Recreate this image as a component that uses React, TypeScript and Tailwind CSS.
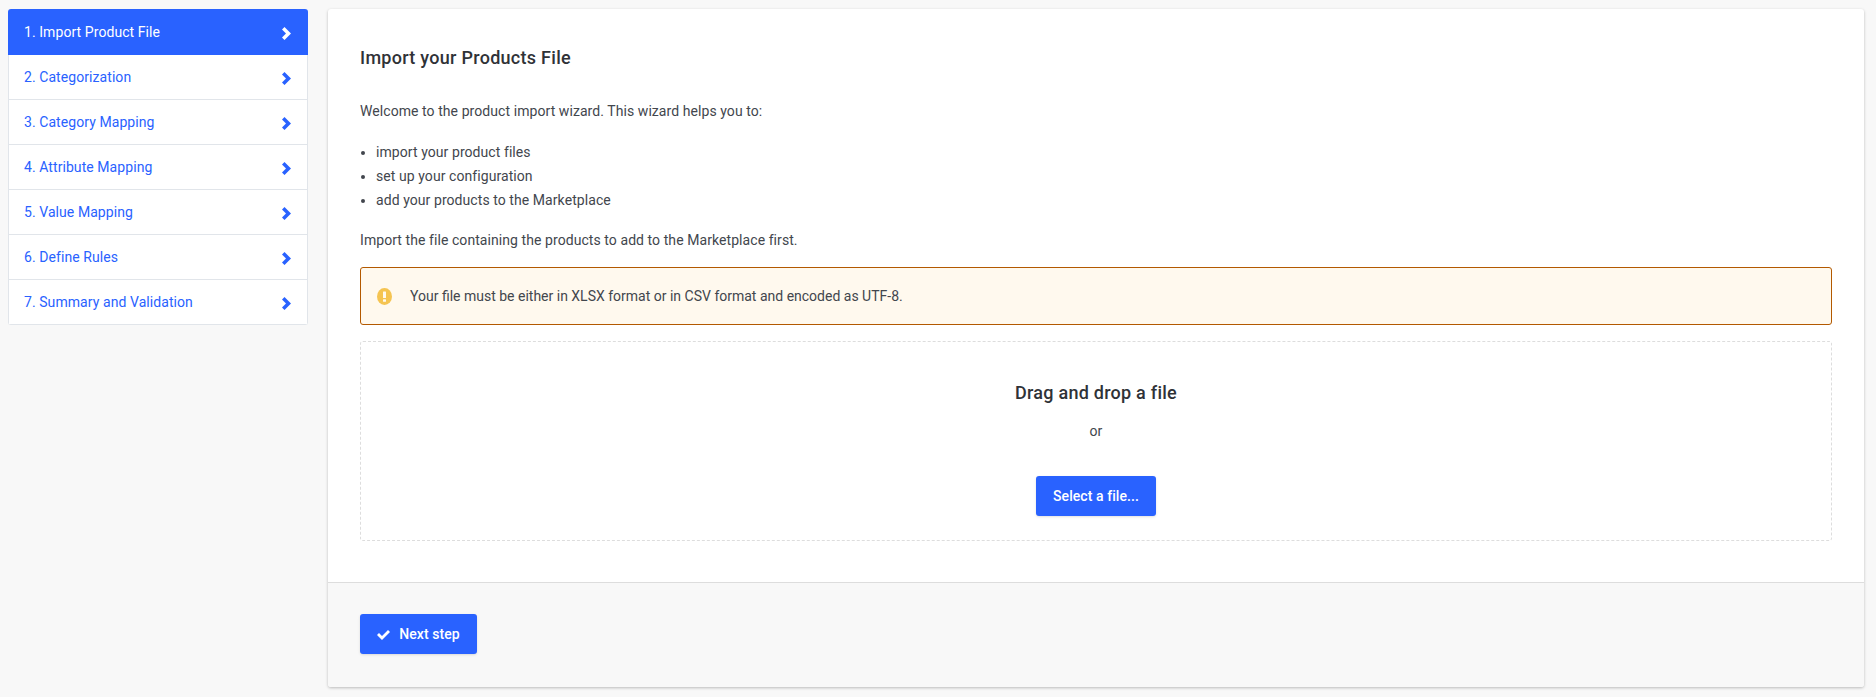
const steps = [
  "1. Import Product File",
  "2. Categorization",
  "3. Category Mapping",
  "4. Attribute Mapping",
  "5. Value Mapping",
  "6. Define Rules",
  "7. Summary and Validation",
];

const Chevron = () => (
  <svg viewBox="0 0 9 13" className="w-[9px] h-[13px] mt-[2px] fill-current">
    <path d="M0 2.5 L2.5 0 L9 6.5 L2.5 13 L0 10.5 L4 6.5 Z" />
  </svg>
);

const App = () => {
  return (
    <div className="min-h-[697px] bg-[#f8f8f8] pt-[9px] px-2 flex items-start gap-5 font-['Roboto',sans-serif] text-[14px] tracking-[0.005em] text-[#42464d]">
      <ul className="w-[300px] shrink-0 rounded-[3px] overflow-hidden">
        {steps.map((step, index) => (
          <li
            key={step}
            className={
              index === 0
                ? "h-[46px] pl-4 pr-[17px] flex items-center justify-between bg-[#2962ff] text-white"
                : "h-[45px] pl-[15px] pr-4 flex items-center justify-between bg-white text-[#2962ff] border-x border-b border-[#e1e5ea]"
            }
          >
            <span>{step}</span>
            <Chevron />
          </li>
        ))}
      </ul>

      <main className="w-[1536px] h-[678px] flex flex-col bg-white rounded-[3px] shadow-[0_1px_3px_rgba(0,0,0,0.25)]">
        <section className="h-[573px] px-8 pt-[37px]">
          <h2 className="text-[18px] leading-6 font-medium tracking-[0.28px] text-[#2f3237]">Import your Products File</h2>
          <p className="mt-[29px] leading-6">Welcome to the product import wizard. This wizard helps you to:</p>
          <ul className="mt-[17px] ml-4 list-disc leading-6">
            <li>import your product files</li>
            <li>set up your configuration</li>
            <li>add your products to the Marketplace</li>
          </ul>
          <p className="mt-4 leading-6">Import the file containing the products to add to the Marketplace first.</p>

          <div className="mt-[15px] h-[58px] px-4 flex items-center gap-[18px] bg-[#fff9ee] border border-[#b35900] rounded-[3px]">
            <svg viewBox="0 0 15 17" className="w-[15px] h-[17px]">
              <ellipse cx="7.5" cy="8.5" rx="7.5" ry="8.5" fill="#f5c451" />
              <rect x="6" y="3.5" width="3" height="6.5" rx="0.5" fill="#fff9ee" />
              <rect x="6" y="11.2" width="3" height="2.6" rx="0.5" fill="#fff9ee" />
            </svg>
            <span className="tracking-normal">Your file must be either in XLSX format or in CSV format and encoded as UTF-8.</span>
          </div>

          <div className="mt-[16px] h-[200px] flex flex-col items-center border border-dashed border-[#dddddd] rounded-[3px]">
            <h3 className="mt-[39px] text-[18px] leading-6 font-medium tracking-[0.25px] text-[#2f3237]">Drag and drop a file</h3>
            <p className="mt-[14px] leading-6">or</p>
            <button className="mt-[33px] w-[120px] h-10 bg-[#2962ff] text-white font-medium rounded-[3px] shadow-sm">
              Select a file...
            </button>
          </div>
        </section>

        <footer className="flex-1 px-8 pt-[31px] bg-[#f8f8f8] border-t border-[#dddddd] rounded-b-[3px]">
          <button className="w-[117px] h-10 flex items-center justify-center gap-[9px] bg-[#2962ff] text-white font-medium rounded-[3px] shadow-sm">
            <svg viewBox="0 0 13 11" className="w-[13px] h-[11px] fill-current">
              <path d="M0 6 L2 4 L5 7 L11 1 L13 3 L5 11 Z" />
            </svg>
            Next step
          </button>
        </footer>
      </main>
    </div>
  );
};

export default App;
